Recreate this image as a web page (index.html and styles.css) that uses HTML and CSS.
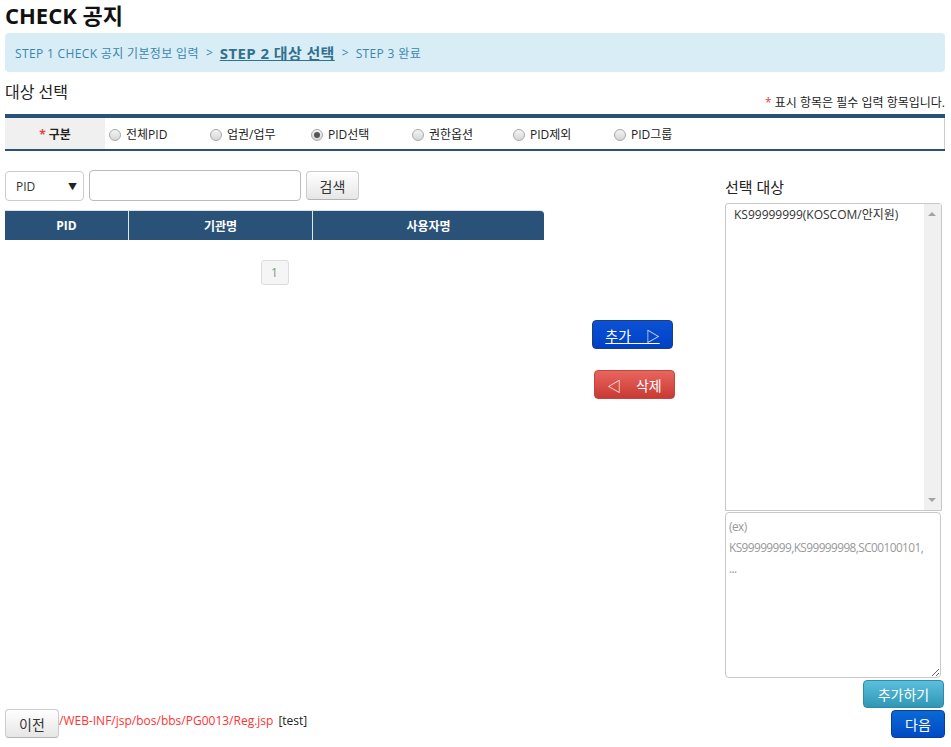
FILE: index.html
```html
<!DOCTYPE html>
<html lang="ko">
<head>
<meta charset="utf-8">
<title>CHECK 공지</title>
<link rel="stylesheet" href="styles.css">
</head>
<body>
<div class="page">
  <h1 class="title">CHECK 공지</h1>
  <div class="steps">
    <span class="st">STEP 1 CHECK 공지 기본정보 입력</span>
    <span class="sep">&gt;</span>
    <a class="cur">STEP 2 대상 선택</a>
    <span class="sep">&gt;</span>
    <span class="st">STEP 3 완료</span>
  </div>

  <div class="sec-head">
    <div class="sec-title">대상 선택</div>
    <div class="req-note"><span class="star">*</span> 표시 항목은 필수 입력 항목입니다.</div>
  </div>

  <table class="form-tbl">
    <tr>
      <th><span class="star">*</span> 구분</th>
      <td>
        <div class="radios">
          <label class="rad"><span class="dot"></span>전체PID</label>
          <label class="rad"><span class="dot"></span>업권/업무</label>
          <label class="rad"><span class="dot on"></span>PID선택</label>
          <label class="rad"><span class="dot"></span>권한옵션</label>
          <label class="rad"><span class="dot"></span>PID제외</label>
          <label class="rad"><span class="dot"></span>PID그룹</label>
        </div>
      </td>
    </tr>
  </table>

  <div class="main">
    <div class="left">
      <div class="search">
        <div class="sel"><span>PID</span><span class="caret">▼</span></div>
        <input class="inp" type="text">
        <button class="btn btn-default">검색</button>
      </div>
      <div class="list-head">
        <div class="c1">PID</div>
        <div class="c2">기관명</div>
        <div class="c3">사용자명</div>
      </div>
      <div class="paging"><span class="pg">1</span></div>
    </div>

    <div class="mid">
      <button class="btn btn-add"><u>추가 &nbsp; &nbsp;▷</u></button>
      <button class="btn btn-del">◁ &nbsp; &nbsp;삭제</button>
    </div>

    <div class="right">
      <div class="r-title">선택 대상</div>
      <div class="listbox">
        <div class="lb-items">
          <div class="lb-item">KS99999999(KOSCOM/안지원)</div>
        </div>
        <div class="lb-scroll">
          <span class="arr up"></span>
          <span class="arr down"></span>
        </div>
      </div>
      <textarea class="ta" placeholder="(ex)&#10;KS99999999,KS99999998,SC00100101,&#10;..."></textarea>
      <div class="r-actions"><button class="btn btn-info">추가하기</button></div>
    </div>
  </div>

  <div class="footer">
    <div class="f-left">
      <button class="btn btn-default btn-prev">이전</button><span class="path">/WEB-INF/jsp/bos/bbs/PG0013/Reg.jsp</span> <span class="tag">[test]</span>
    </div>
    <button class="btn btn-next">다음</button>
  </div>
</div>
</body>
</html>
```
FILE: styles.css
```css
* { box-sizing: border-box; }
html, body { margin: 0; padding: 0; background: #fff; }
body {
  font-family: "Open Sans", "Noto Sans CJK KR", sans-serif;
  font-size: 12px;
  color: #333;
}
.page { padding: 0 6px 0 5px; width: 951px; }

.title {
  margin: 0 0 2px;
  font-size: 22px;
  line-height: 31px;
  font-weight: 700;
  color: #111;
}

.steps {
  height: 39px;
  background: #d9edf7;
  border-radius: 4px;
  padding: 0 10px;
  display: flex;
  align-items: center;
  gap: 7px;
  color: #3a87ad;
  font-size: 12px;
}
.steps .st { letter-spacing: 0.35px; }
.steps .cur {
  font-size: 15px;
  font-weight: 700;
  letter-spacing: 0.4px;
  color: #31708f;
  text-decoration: underline;
}
.steps .sep { font-size: 12px; }

.sec-head {
  height: 42px;
  display: flex;
  justify-content: space-between;
}
.sec-title {
  font-size: 16px;
  line-height: 20px;
  padding-top: 10px;
  color: #222;
}
.req-note {
  align-self: flex-end;
  line-height: 16px;
  padding-bottom: 3px;
  color: #222;
  font-size: 12px;
}
.star { color: #e8453c; }

.form-tbl {
  width: 100%;
  border-collapse: collapse;
  border-top: 4px solid #2a5279;
  border-bottom: 2px solid #2a5279;
}
.form-tbl th, .form-tbl td {
  height: 34px;
  border-top: 1px solid #ccc;
  border-bottom: 1px solid #ccc;
  padding: 0;
}
.form-tbl th {
  width: 100px;
  background: #f0f0f0;
  font-weight: 700;
  font-size: 12px;
  color: #222;
  text-align: center;
}
.form-tbl td { border-right: 1px solid #ccc; padding-left: 4px; }
.radios { display: flex; }
.rad {
  width: 101px;
  display: flex;
  align-items: center;
  gap: 5px;
  color: #222;
  font-size: 12px;
}
.dot {
  width: 12px; height: 12px;
  border-radius: 50%;
  border: 1px solid #a9a9a9;
  background: linear-gradient(#f4f4f4, #d6d6d6);
  position: relative;
  margin-top: 2px;
}
.dot.on::after {
  content: "";
  position: absolute;
  left: 2px; top: 2px;
  width: 6px; height: 6px;
  border-radius: 50%;
  background: #555;
}

.main { display: flex; }
.left { width: 539px; padding-top: 19px; }
.search { display: flex; gap: 5px; align-items: flex-start; }
.sel {
  width: 79px; height: 30px;
  border: 1px solid #ccc;
  border-radius: 4px;
  display: flex;
  align-items: center;
  justify-content: space-between;
  padding: 0 6px 0 10px;
  margin-top: 1px;
  color: #333;
}
.caret { font-size: 9px; color: #222; }
.inp {
  width: 212px; height: 31px;
  border: 1px solid #bbb;
  border-radius: 4px;
  margin: 0;
}
.btn {
  font-family: "Open Sans", "Noto Sans CJK KR", sans-serif;
  border-radius: 4px;
  cursor: pointer;
  padding: 0;
  margin: 0;
}
.btn-default {
  width: 53px; height: 29px;
  margin-top: 1px;
  border: 1px solid #ccc;
  border-bottom-color: #b3b3b3;
  background: linear-gradient(#fff, #e6e6e6);
  font-size: 14px;
  color: #333;
}
.list-head {
  margin-top: 9px;
  display: flex;
  height: 30px;
  background: #2a5279;
  border-top: 1px solid #e0e4ea;
  border-radius: 0 4px 0 0;
  color: #fff;
  font-weight: 700;
  font-size: 12px;
}
.list-head > div { display: flex; align-items: center; justify-content: center; }
.c1 { width: 124px; border-right: 1px solid #dfe6ee; }
.c2 { width: 184px; border-right: 1px solid #dfe6ee; }
.c3 { flex: 1; }
.paging { margin-top: 20px; display: flex; justify-content: center; }
.pg {
  width: 28px; height: 25px;
  border: 1px solid #ddd;
  border-radius: 3px;
  background: #f5f5f5;
  color: #7a9a7a;
  display: flex; align-items: center; justify-content: center;
  font-size: 12px;
}

.mid {
  width: 181px;
  padding-top: 169px;
  display: flex;
  flex-direction: column;
  align-items: flex-start;
}
.btn-add {
  margin-left: 48px;
  width: 81px; height: 29px;
  border: 1px solid #1f3d78;
  background: linear-gradient(#0a52d6, #0041c4);
  color: #fff;
  font-size: 14px;
}
.btn-add u { text-underline-offset: 2px; }
.btn-del {
  margin-left: 50px;
  margin-top: 21px;
  width: 81px; height: 29px;
  border: 1px solid #c0463f;
  background: linear-gradient(#ea6560, #c83a33);
  color: #fff;
  font-size: 14px;
}

.right { width: 220px; padding-top: 26px; }
.r-title { font-size: 15px; line-height: 20px; color: #222; }
.listbox {
  margin-top: 6px;
  width: 217px; height: 308px;
  border: 1px solid #c8c8c8;
  border-radius: 3px 3px 0 0;
  display: flex;
}
.lb-items { flex: 1; padding: 3px 8px; }
.lb-item { font-size: 12px; line-height: 16px; color: #333; }
.lb-scroll {
  width: 17px;
  background: #f0f0f0;
  position: relative;
}
.arr { position: absolute; left: 4px; width: 0; height: 0; border-left: 4px solid transparent; border-right: 4px solid transparent; }
.arr.up { top: 8px; border-bottom: 4px solid #a3a3a3; }
.arr.down { bottom: 8px; border-top: 4px solid #a3a3a3; }
.ta {
  display: block;
  margin-top: 1px;
  width: 216px; height: 166px;
  border: 1px solid #c8c8c8;
  border-radius: 4px;
  padding: 3px 2px 3px 3px;
  font-family: "Open Sans", "Noto Sans CJK KR", sans-serif;
  font-size: 11.8px;
  letter-spacing: -0.55px;
  line-height: 21px;
  resize: both;
}
.ta::placeholder { color: #999; }
.r-actions { display: flex; justify-content: flex-end; margin-top: 2px; padding-right: 1px; }
.btn-info {
  width: 81px; height: 28px;
  border: 1px solid #2f8aa5;
  background: linear-gradient(#5bc0de, #2f96b4);
  color: #fff;
  font-size: 14px;
}

.footer {
  display: flex;
  justify-content: space-between;
  align-items: flex-end;
  margin-top: 0;
}
.f-left { display: flex; align-items: center; }
.btn-prev { height: 29px; width: 54px; }
.path { color: #ff3333; font-size: 12px; margin-top: -6px; }
.tag { color: #222; font-size: 12px; margin-left: 5px; margin-top: -6px; }
.btn-next {
  width: 54px; height: 28px;
  border: 1px solid #0b3e9a;
  background: linear-gradient(#0a6ad6, #0049c4);
  color: #fff;
  font-size: 14px;
}
```
